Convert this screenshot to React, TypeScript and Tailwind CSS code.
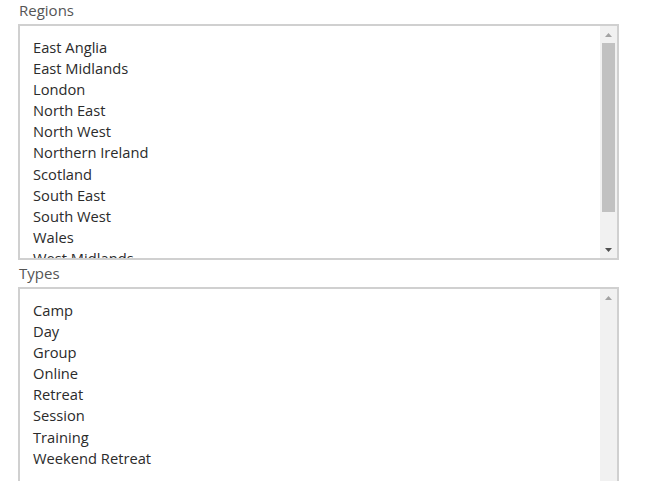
import React from "react";

const regions = [
  "East Anglia",
  "East Midlands",
  "London",
  "North East",
  "North West",
  "Northern Ireland",
  "Scotland",
  "South East",
  "South West",
  "Wales",
  "West Midlands",
  "Yorkshire and the Humber",
];

const types = ["Camp", "Day", "Group", "Online", "Retreat", "Session", "Training", "Weekend Retreat"];

function Up({ color }: { color: string }) {
  return (
    <svg width="7" height="4" viewBox="0 0 7 4">
      <polygon points="0,4 7,4 3.5,0" fill={color} />
    </svg>
  );
}
function Down({ color }: { color: string }) {
  return (
    <svg width="7" height="4" viewBox="0 0 7 4">
      <polygon points="0,0 7,0 3.5,4" fill={color} />
    </svg>
  );
}

function ListBox({ items, thumb }: { items: string[]; thumb: boolean }) {
  return (
    <div className="flex h-[236px] w-[601px] overflow-hidden border-2 border-[#d0d0d0] bg-white">
      <div className="flex-1 overflow-hidden pl-[13px] pt-[11px]">
        {items.map((t) => (
          <div key={t} className="h-[21.1px] text-[14.7px] leading-[21.1px] text-[#2b2b2b] whitespace-nowrap">
            {t}
          </div>
        ))}
      </div>
      <div className="flex w-[17px] flex-col bg-[#f1f1f1]">
        <div className="flex h-[17px] items-center justify-center">
          <Up color="#a3a3a3" />
        </div>
        <div className="flex-1">
          {thumb && <div className="ml-[2px] mr-[2px] h-[169px] bg-[#c1c1c1]" />}
        </div>
        <div className="flex h-[17px] items-center justify-center">
          <Down color={thumb ? "#505050" : "#a3a3a3"} />
        </div>
      </div>
    </div>
  );
}

export default function App() {
  return (
    <div
      className="h-[481px] w-[652px] overflow-hidden bg-white pl-[18px]"
      style={{ fontFamily: '"Open Sans", sans-serif' }}
    >
      <div className="pl-[1px] text-[15px] leading-[21px] text-[#555555]">Regions</div>
      <div className="mt-[3px]">
        <ListBox items={regions} thumb={true} />
      </div>
      <div className="mt-[3px] pl-[1px] text-[15px] leading-[21px] text-[#555555]">Types</div>
      <div className="mt-[3px]">
        <ListBox items={types} thumb={false} />
      </div>
    </div>
  );
}
